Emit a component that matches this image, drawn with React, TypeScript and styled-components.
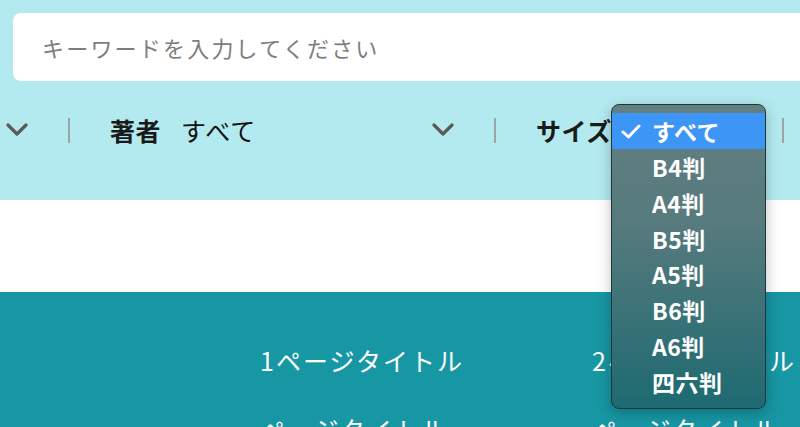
import React from "react";
import styled, { createGlobalStyle } from "styled-components";

const Global = createGlobalStyle`
  html, body { margin: 0; padding: 0; }
  body {
    width: 800px;
    height: 427px;
    overflow: hidden;
    font-family: "Noto Sans CJK JP", "Noto Sans", sans-serif;
    background: #ffffff;
  }
`;

const Page = styled.div`
  position: relative;
  width: 800px;
  height: 427px;
  overflow: hidden;
`;

const Header = styled.header`
  height: 200px;
  background: #b3eaf0;
  padding-top: 13px;
  box-sizing: border-box;
`;

const SearchBox = styled.div`
  margin-left: 13px;
  width: 840px;
  height: 68px;
  background: #ffffff;
  border-radius: 8px;
  display: flex;
  align-items: center;
  padding-left: 29px;
  box-sizing: border-box;
`;

const Placeholder = styled.span`
  font-size: 22px;
  letter-spacing: 2.2px;
  color: #7d7d7d;
`;

const FilterRow = styled.div`
  margin-top: 24px;
  height: 50px;
  display: flex;
  align-items: center;
  padding-left: 6px;
  gap: 40px;
  white-space: nowrap;
`;

const Sep = styled.span`
  width: 2px;
  height: 25px;
  background: #9aa5a7;
  flex: none;
`;

const Group = styled.div`
  display: flex;
  align-items: center;
  gap: 20px;
`;

const Label = styled.span`
  font-size: 25px;
  font-weight: 700;
  letter-spacing: 0.5px;
  color: #1a1a1a;
`;

const Select = styled.div<{ $w: number }>`
  width: ${(p) => p.$w}px;
  display: flex;
  align-items: center;
  justify-content: space-between;
  font-size: 25px;
  letter-spacing: 1px;
  color: #111;
`;

const Chevron = () => (
  <svg width="22" height="14" viewBox="0 0 22 14" style={{ flex: "none" }}>
    <path d="M2 2 L11 11 L20 2" fill="none" stroke="#5a5a5a" strokeWidth="3.2" strokeLinecap="round" strokeLinejoin="round" />
  </svg>
);

const Band = styled.div`
  height: 92px;
  background: #ffffff;
`;

const Content = styled.section`
  height: 135px;
  background: #1796a3;
  padding: 50px 0 0 260px;
  box-sizing: border-box;
  display: grid;
  grid-template-columns: 332px 332px;
  grid-auto-rows: 69px;
  align-items: start;
`;

const Title = styled.span`
  font-size: 25px;
  letter-spacing: 2px;
  color: #ffffff;
  white-space: nowrap;
`;

const Popup = styled.div`
  position: absolute;
  left: 611px;
  top: 104px;
  width: 155px;
  height: 305px;
  box-sizing: border-box;
  border: 1px solid #1f3537;
  border-radius: 8px;
  background: linear-gradient(180deg, #627f82 0%, #567a7d 40%, #1d6a71 100%);
  box-shadow: 0 4px 14px rgba(0, 0, 0, 0.25);
  padding: 8px 0 8px;
  display: flex;
  flex-direction: column;
`;

const Option = styled.div<{ $active?: boolean }>`
  height: 36px;
  display: flex;
  align-items: center;
  padding-left: 40px;
  position: relative;
  font-size: 23px;
  font-weight: 700;
  letter-spacing: 0.5px;
  color: #ffffff;
  background: ${(p) => (p.$active ? "#3d95f5" : "transparent")};
  box-sizing: border-box;
`;

const Check = styled.svg`
  position: absolute;
  left: 9px;
  top: 11px;
`;

const sizes = ["すべて", "B4判", "A4判", "B5判", "A5判", "B6判", "A6判", "四六判"];

export default function App() {
  return (
    <Page>
      <Global />
      <Header>
        <SearchBox>
          <Placeholder>キーワードを入力してください</Placeholder>
        </SearchBox>
        <FilterRow>
          <Chevron />
          <Sep />
          <Group>
            <Label>著者</Label>
            <Select $w={273}>
              <span>すべて</span>
              <Chevron />
            </Select>
          </Group>
          <Sep />
          <Group>
            <Label>サイズ</Label>
            <Select $w={110}>
              <span>すべて</span>
              <Chevron />
            </Select>
          </Group>
          <Sep />
        </FilterRow>
      </Header>
      <Band />
      <Content>
        <Title>1ページタイトル</Title>
        <Title>2ページタイトル</Title>
        <Title>ページタイトル</Title>
        <Title>ページタイトル</Title>
      </Content>
      <Popup>
        {sizes.map((s, i) => (
          <Option key={s} $active={i === 0}>
            {i === 0 && (
              <Check width="20" height="15" viewBox="0 0 20 15">
                <path d="M2 8 L7.5 13 L18 2" fill="none" stroke="#ffffff" strokeWidth="3" strokeLinecap="round" strokeLinejoin="round" />
              </Check>
            )}
            {s}
          </Option>
        ))}
      </Popup>
    </Page>
  );
}
